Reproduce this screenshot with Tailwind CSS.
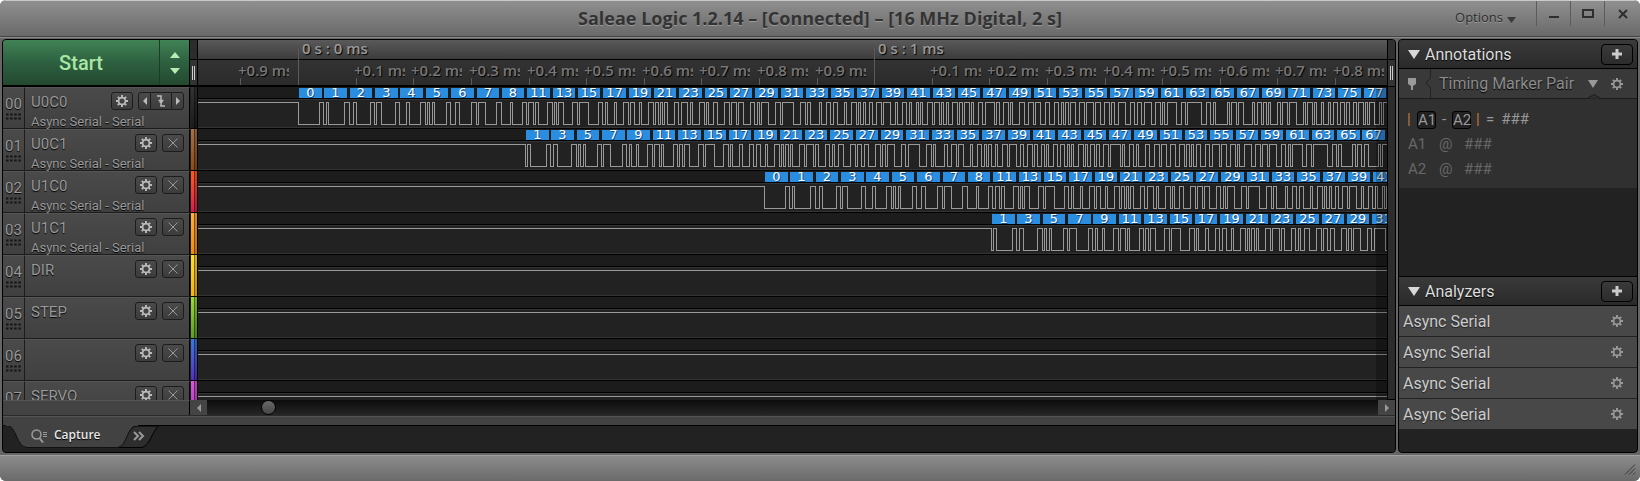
<!DOCTYPE html>
<html lang="en">
<head>
<meta charset="UTF-8">
<meta name="viewport" content="width=device-width, initial-scale=1.0">
<title>Saleae Logic 1.2.14</title>
<script src="https://cdn.jsdelivr.net/npm/@tailwindcss/browser@4"></script>
</head>
<body class="h-screen overflow-hidden bg-white font-['Roboto',sans-serif]">

<!-- Shared icons -->
<svg class="hidden">
    <symbol id="icon-gear" viewBox="0 0 12 12">
        <circle cx="6" cy="6" r="3.4" fill="none" stroke="currentColor" stroke-width="1.7"/>
        <path d="M6 0v2.4M6 9.6V12M0 6h2.4M9.6 6H12M1.8 1.8l1.6 1.6M8.6 8.6l1.6 1.6M1.8 10.2l1.6-1.6M8.6 3.4l1.6-1.6" stroke="currentColor" stroke-width="1.9"/>
    </symbol>
    <symbol id="icon-plus" viewBox="0 0 12 12">
        <path d="M6 1v10M1 6h10" stroke="currentColor" stroke-width="3"/>
    </symbol>
</svg>

<div class="flex h-full flex-col overflow-hidden rounded-md bg-[#666]">

    <!-- Title bar -->
    <header class="relative flex h-[37px] shrink-0 items-start justify-end border-t border-b border-t-[#c8caca] border-b-[#444] bg-linear-to-b from-[#8f8f8f] to-[#6a6a6a]">
        <h1 class="absolute inset-x-0 top-[3px] text-center font-['Open_Sans',sans-serif] text-lg leading-7 font-bold text-[#333] [text-shadow:0_1px_0_#999]">Saleae Logic 1.2.14 – [Connected] – [16 MHz Digital, 2 s]</h1>
        <button class="relative flex h-[34px] items-center gap-1 pr-5 font-['Open_Sans',sans-serif] text-[13px] text-[#2e2e2e] [text-shadow:0_1px_0_#999]">Options
            <svg class="mt-1 h-[6px] w-[9px]" viewBox="0 0 9 6"><path d="M0 0h9L4.500 6z" fill="#3a3a3a"/></svg>
        </button>
        <button aria-label="Minimize" class="relative flex h-[25px] w-[34px] items-center justify-center border-l border-[#5c5c5c]">
            <svg class="size-3" viewBox="0 0 12 12"><path d="M1 9h10" stroke="#2e2e2e" stroke-width="2"/></svg>
        </button>
        <button aria-label="Maximize" class="relative flex h-[25px] w-[34px] items-center justify-center border-l border-[#5c5c5c]">
            <svg class="h-[9px] w-3" viewBox="0 0 12 9"><path d="M1 1h10v7H1z" fill="none" stroke="#2e2e2e" stroke-width="2"/></svg>
        </button>
        <button aria-label="Close" class="relative flex h-[25px] w-[36px] items-center justify-center border-l border-[#5c5c5c]">
            <svg class="size-[10px]" viewBox="0 0 10 10"><path d="M1 1l8 8M9 1L1 9" stroke="#2e2e2e" stroke-width="2"/></svg>
        </button>
    </header>

    <main class="flex min-h-0 flex-1 gap-[2px] border-t border-[#8a8a8a] px-[2px] pt-px pb-[2px]">

        <!-- Capture panel -->
        <section class="flex min-w-0 flex-1 flex-col overflow-hidden rounded-[4px] border border-black bg-[#222]">
            <div class="flex min-h-0 flex-1">
                <div class="flex min-w-0 flex-1 flex-col overflow-hidden">
                    <div class="flex h-[47px] shrink-0">
                        <div class="flex w-[187px] border-r border-b-2 border-black">
                            <button class="w-[156px] bg-linear-to-b from-[#418355] via-[#2d6040] to-[#23492f] text-xl font-medium text-[#a9e6a3]">Start</button>
                            <button aria-label="Capture settings" class="flex flex-1 flex-col items-center justify-center gap-[10px] border-l border-[#1c3c26] bg-linear-to-b from-[#418355] via-[#2d6040] to-[#23492f]">
                                <svg class="h-[6px] w-[10px]" viewBox="0 0 10 6"><path d="M0 6L5 0l5 6z" fill="#b8eab2"/></svg>
                                <svg class="h-[6px] w-[10px]" viewBox="0 0 10 6"><path d="M0 0h10L5 6z" fill="#b8eab2"/></svg>
                            </button>
                        </div>
                        <div class="w-2 border-r border-b-2 border-black">
                            <div class="h-[19px] bg-[#2c2c2c]"></div>
                            <div class="flex h-[26px] items-center justify-center gap-px border-t border-black bg-[#333]">
                                <i class="h-[14px] w-px bg-[#ccc]"></i><i class="h-[14px] w-px bg-[#ccc]"></i>
                            </div>
                        </div>
                        <div id="ruler" class="relative min-w-0 flex-1 overflow-hidden border-b-2 border-black bg-[#333] font-['Open_Sans',sans-serif] text-[15px] text-[#999] [text-shadow:1px_1px_1px_#000]">
                            <div class="h-5 border-b border-black bg-linear-to-b from-[#5a5a5a] to-[#3c3c3c]"></div>
                            <div class="h-[25px] bg-linear-to-b from-[#333] to-[#2b2b2b]"></div>
                        </div>
                    </div>
                    <div id="channels" class="min-h-0 flex-1 overflow-hidden"></div>
                </div>
                <!-- Right grip -->
                <div class="flex w-2 flex-col border-l border-b border-black bg-[#2c2c2c]">
                    <div class="h-5 border-b border-black bg-[#303030]"></div>
                    <div class="flex h-[27px] items-center justify-center gap-px border-b border-black bg-[#333]">
                        <i class="h-[14px] w-px bg-[#ccc]"></i><i class="h-[14px] w-px bg-[#ccc]"></i>
                    </div>
                </div>
            </div>

            <!-- Horizontal scroll bar -->
            <div class="flex h-4 shrink-0 border-b border-[#2a2a2a]">
                <div class="w-[187px] border-t border-r border-t-[#555] border-r-black bg-[#434343]"></div>
                <button aria-label="Scroll left" class="flex w-[17px] items-center justify-center bg-[#444]">
                    <svg class="h-2 w-1" viewBox="0 0 4 8"><path d="M4 0v8L0 4z" fill="#999"/></svg>
                </button>
                <div class="flex-1 bg-linear-to-b from-[#0c0c0c] to-[#262626] pl-[54px]">
                    <div class="size-[15px] rounded-full border border-black bg-linear-to-b from-[#6a6a6a] to-[#454545]"></div>
                </div>
                <button aria-label="Scroll right" class="flex w-[17px] items-center justify-center bg-[#444]">
                    <svg class="h-2 w-1" viewBox="0 0 4 8"><path d="M0 0v8l4-4z" fill="#999"/></svg>
                </button>
            </div>
            <div class="h-[9px] shrink-0 border-t border-[#555] bg-[#424242]"></div>

            <!-- Tabs -->
            <nav class="relative flex h-[27px] shrink-0 items-start border-t border-black bg-[#222]">
                <svg class="absolute top-[-1px] left-0 h-[24px] w-[160px]" viewBox="0 0 160 24">
                    <path d="M115 22.500C122 21 124 1 134 1h21.500C150 5 146 22.500 138 22.500z" fill="#2e2e2e" stroke="#000"/>
                    <path d="M0 0.500h4C14 1 13 22 24 22.500h91C124 21 124 1 134 .5" fill="#424242" stroke="#111"/>
                    <path d="M3 0h132" stroke="#424242" stroke-width="2"/>
                </svg>
                <button class="relative ml-[28px] flex h-[18px] items-center gap-[6px] font-['Open_Sans',sans-serif] text-xs font-semibold text-[#e8e8e8] [text-shadow:0_1px_1px_#000]">
                    <svg class="mt-[2px] h-[14px] w-[17px]" viewBox="0 0 17 14" fill="none" stroke="#999"><circle cx="5.500" cy="5.500" r="4.500" stroke-width="1.500"/><path d="M8.500 9l3.500 4.500" stroke-width="2"/><path d="M12 3.500h4M12 5.500h4M12 7.500h4"/></svg>
                    Capture
                </button>
                <button aria-label="More tabs" class="relative ml-[32px] flex h-[20px] items-center">
                    <svg class="h-[10px] w-[12px]" viewBox="0 0 12 10" fill="none" stroke="#999" stroke-width="2"><path d="M1 1l4 4-4 4M6 1l4 4-4 4"/></svg>
                </button>
            </nav>
        </section>

        <!-- Side panel -->
        <aside class="flex w-[240px] shrink-0 flex-col overflow-hidden rounded-[4px] border border-black bg-[#222]">
            <div class="flex h-7 items-center bg-linear-to-b from-[#3a3a3a] to-[#2a2a2a] pr-1 pl-[9px]">
                <svg class="h-[9px] w-3" viewBox="0 0 12 9"><path d="M0 0h12L6 9z" fill="#d8d8d8"/></svg>
                <h2 class="flex-1 pt-[2px] pl-[5px] text-base leading-5 text-[#ddd] [text-shadow:0_1px_1px_#000]">Annotations</h2>
                <button aria-label="Add annotation" class="flex h-[21px] w-[32px] items-center justify-center rounded-[4px] border border-black bg-linear-to-b from-[#3a3a3a] to-[#2c2c2c] text-[#ccc]"><svg class="size-3"><use href="#icon-plus"/></svg></button>
            </div>
            <div class="relative flex h-[31px] items-center border-t border-b border-t-black border-b-[#1c1c1c] bg-[#393939] text-[#8c8c8c]">
                <svg class="ml-[9px] h-3 w-2" viewBox="0 0 8 12"><path d="M0 0h8v6L5 8v4H3V8L0 6z" fill="#999"/></svg>
                <svg class="ml-[9px] h-[29px] w-[6px]" viewBox="0 0 6 29"><path d="M5.500 0v9L1 14l4.500 5v10" fill="none" stroke="#222"/></svg>
                <span class="flex-1 pt-px pl-[8px] text-base leading-5 [text-shadow:0_1px_1px_#000]">Timing Marker Pair</span>
                <button aria-label="Marker type"><svg class="h-2 w-[10px]" viewBox="0 0 10 8"><path d="M0 0h10L5 8z" fill="#999"/></svg></button>
                <button aria-label="Marker settings" class="mr-[14px] ml-[13px] text-[#999]"><svg class="size-3"><use href="#icon-gear"/></svg></button>
                <svg class="absolute right-[36px] -bottom-px h-[5px] w-[14px]" viewBox="0 0 14 5"><path d="M0 4.500L7 .5l7 4" fill="#303030" stroke="#1c1c1c"/></svg>
            </div>
            <div class="h-[89px] bg-[#303030] pt-2 pl-[9px] text-[15px] leading-[25px] text-[#686868]">
                <p class="flex items-center text-[#999]">
                    <i class="h-[13px] w-[2px] bg-[#8a5a34]"></i>
                    <span class="ml-[7px] w-[19px] rounded-[3px] border border-black bg-[#222] text-center leading-[16px]">A1</span>
                    <span class="w-[16px] text-center">-</span>
                    <span class="w-[19px] rounded-[3px] border border-black bg-[#222] text-center leading-[16px]">A2</span>
                    <i class="ml-[6px] h-[13px] w-[2px] bg-[#8a5a34]"></i>
                    <span class="ml-[7px]">=</span>
                    <span class="ml-[7px]">###</span>
                </p>
                <p class="flex"><span class="w-[31px]">A1</span><span class="w-[25px]">@</span><span>###</span></p>
                <p class="flex"><span class="w-[31px]">A2</span><span class="w-[25px]">@</span><span>###</span></p>
            </div>
            <div class="mt-auto flex h-[29px] items-center border-t border-black bg-linear-to-b from-[#3a3a3a] to-[#2a2a2a] pr-1 pl-[9px]">
                <svg class="h-[9px] w-3" viewBox="0 0 12 9"><path d="M0 0h12L6 9z" fill="#d8d8d8"/></svg>
                <h2 class="flex-1 pt-[2px] pl-[5px] text-base leading-5 text-[#ddd] [text-shadow:0_1px_1px_#000]">Analyzers</h2>
                <button aria-label="Add analyzer" class="flex h-[21px] w-[32px] items-center justify-center rounded-[4px] border border-black bg-linear-to-b from-[#3a3a3a] to-[#2c2c2c] text-[#ccc]"><svg class="size-3"><use href="#icon-plus"/></svg></button>
            </div>
            <ul id="analyzers" class="mb-[22px] border-t border-black"></ul>
        </aside>
    </main>

    <!-- Status bar -->
    <footer class="flex h-[26px] shrink-0 items-end justify-end border-t border-[#a0a0a0] bg-linear-to-b from-[#8c8c8c] to-[#6a6a6a] pr-1 pb-[6px]">
        <svg class="h-[11px] w-[12px]" viewBox="0 0 12 11"><path d="M1 10.500l10-10M5 10.500l6-6M9 10.500l2-2" stroke="#3a3a3a"/></svg>
    </footer>
</div>

<script>
// --- Time scale (pixels, measured from the left of the graph) ---
const ZERO_X = 100;
const PX_PER_MS = 576;
const BIT_PX = 2.304;      // 250 kbaud
const FRAME_PX = 11 * BIT_PX; // start + 8 data + 2 stop

const lowBytes = [0, 1, 2, 3, 4, 5, 6, 7, 8];
const odd = (from, to) => Array.from({ length: (to - from) / 2 + 1 }, (_, i) => from + i * 2);

const CHANNELS = [
    { name: 'U0C0', serial: true, bar: 'from-[#333] to-[#1c1c1c]', start: 100.6, bytes: [...lowBytes, ...odd(11, 77)] },
    { name: 'U0C1', serial: true, bar: 'from-[#a5714a] to-[#8a4c14]', start: 327.6, bytes: odd(1, 67) },
    { name: 'U1C0', serial: true, bar: 'from-[#ff5a1c] to-[#d81848]', start: 566.6, bytes: [...lowBytes, ...odd(11, 41)] },
    { name: 'U1C1', serial: true, bar: 'from-[#ffb038] to-[#f58a00]', start: 793.6, bytes: odd(1, 31) },
    { name: 'DIR', bar: 'from-[#ffe02c] to-[#f5b400]' },
    { name: 'STEP', bar: 'from-[#9cdc3c] to-[#5c9c24]' },
    { name: '', bar: 'from-[#3878dc] to-[#5030c0]' },
    { name: 'SERVO', bar: 'from-[#d858d8] to-[#a030b0]' },
];

// --- Ruler ---
function renderRuler() {
    const ruler = document.getElementById('ruler');
    let html = '';
    for (let i = -1; ; i++) {
        const x = Math.floor(ZERO_X + 0.6 + i * PX_PER_MS / 10);
        if (x > ruler.clientWidth) break;
        const tenth = (i + 10) % 10;
        if (tenth === 0) {
            html += `<i class="absolute top-2 h-[37px] w-px bg-[#5a5a5a]" style="left:${x}px"></i>
                <span class="absolute top-0 leading-[17px] font-semibold whitespace-nowrap" style="left:${x + 4}px">0 s : ${i / 10} ms</span>`;
        } else {
            html += `<i class="absolute top-[38px] h-[7px] w-px bg-[#5a5a5a]" style="left:${x}px"></i>
                <span class="absolute top-[20px] w-[51px] overflow-hidden leading-[21px] font-semibold whitespace-nowrap text-[#777]" style="left:${x - 2}px">+0.${tenth} ms</span>`;
        }
    }
    ruler.insertAdjacentHTML('beforeend', html);
}

// --- Digital trace: UART frames, LSB first ---
function tracePath(ch) {
    const hi = 15.5, lo = 37.5;
    let d = `M0 ${hi}`;
    if (ch.bytes) {
        let level = 1;
        const go = (x, next) => {
            if (next === level) return;
            d += `H${Math.floor(x) + 0.5}V${next ? hi : lo}`;
            level = next;
        };
        ch.bytes.forEach((byte, n) => {
            const x0 = ch.start + n * FRAME_PX;
            go(x0, 0);
            for (let bit = 0; bit < 8; bit++) go(x0 + (bit + 1) * BIT_PX, (byte >> bit) & 1);
            go(x0 + 9 * BIT_PX, 1);
        });
    }
    return d + 'H4000';
}

function byteBoxes(ch) {
    return (ch.bytes || []).map((byte, n) => {
        const x = Math.floor(ch.start + 1 + n * FRAME_PX);
        const w = Math.floor(ch.start + 23.400 + n * FRAME_PX) - x;
        return `<span class="absolute top-px h-[10px] bg-[#2b8de0] text-center font-['DejaVu_Sans',sans-serif] text-[13px] leading-[10px] text-white [text-shadow:1px_1px_0_#1a4a7a]" style="left:${x}px;width:${w}px">${byte}</span>`;
    }).join('');
}

const BUTTON = 'flex h-[18px] items-center justify-center rounded-[3px] border border-[#1c1c1c] bg-linear-to-b from-[#4a4a4a] to-[#3c3c3c] text-[#bbb]';

function controls(i) {
    const gear = `<button aria-label="Channel settings" class="${BUTTON} w-[22px]"><svg class="size-3"><use href="#icon-gear"/></svg></button>`;
    if (i > 0) {
        return `${gear}<button aria-label="Hide channel" class="${BUTTON} w-[22px]"><svg class="size-[10px]" viewBox="0 0 10 10"><path d="M.5 .5l9 9M9.500 .5l-9 9" stroke="#999"/></svg></button>`;
    }
    return `${gear}<div class="flex">
        <button aria-label="Previous edge" class="${BUTTON} w-[13px] rounded-r-none"><svg class="h-2 w-1" viewBox="0 0 4 8"><path d="M4 0v8L0 4z" fill="currentColor"/></svg></button>
        <button aria-label="Trigger" class="${BUTTON} w-[20px] rounded-none border-x-0"><svg class="h-3 w-2" viewBox="0 0 8 12"><path d="M0 1h4v10h4M1.500 5.500h5M2.500 7h3" fill="none" stroke="currentColor" stroke-width="1.500"/></svg></button>
        <button aria-label="Next edge" class="${BUTTON} w-[13px] rounded-l-none"><svg class="h-2 w-1" viewBox="0 0 4 8"><path d="M0 0v8l4-4z" fill="currentColor"/></svg></button>
    </div>`;
}

function renderChannels() {
    document.getElementById('channels').innerHTML = CHANNELS.map((ch, i) => `
        <div class="flex h-[42px]">
            <div class="w-[22px] border-t border-r border-b border-t-[#555] border-r-[#1c1c1c] border-b-[#1c1c1c] bg-linear-to-b from-[#4a4a4a] to-[#404040] pt-2 text-center text-[15px] leading-[16px] text-[#999] [text-shadow:0_1px_1px_#000]">
                0${i}
                <svg class="mx-auto mt-px h-[7px] w-[15px]" viewBox="0 0 15 7"><path d="M0 1.500h15M0 5.500h15" stroke="#151515" stroke-width="2" stroke-dasharray="2.500 1.600"/></svg>
            </div>
            <div class="w-[165px] border-t border-r border-b border-t-[#555] border-r-black border-b-[#1c1c1c] bg-linear-to-b from-[#4a4a4a] to-[#404040] pr-[5px] pl-[6px] text-[#999] [text-shadow:0_1px_1px_#000]">
                <div class="flex h-[26px] items-center gap-[5px]">
                    <span class="flex-1 pt-[2px] text-[15px]">${ch.name}</span>
                    ${controls(i)}
                </div>
                ${ch.serial ? '<p class="text-[13px] leading-[15px] whitespace-nowrap">Async Serial - Serial</p>' : ''}
            </div>
            <div class="w-2 border-x border-b border-black border-l-[#222] bg-linear-to-b ${ch.bar}"><div class="ml-auto h-full w-[3px] border-l border-black/40 bg-black/20"></div></div>
            <div class="relative min-w-0 flex-1 overflow-hidden border-b border-black bg-[#222]">
                <div class="h-3 border-b border-black bg-[#1c1c1c]"></div>
                <div class="h-[29px] border-y border-[#333] bg-[#222]"></div>
                <svg class="absolute inset-0 h-full w-full"><path d="${tracePath(ch)}" fill="none" stroke="#999" shape-rendering="crispEdges"/></svg>
                ${byteBoxes(ch)}
                <div class="absolute inset-y-0 right-0 w-[11px] bg-black/25"></div>
            </div>
        </div>`).join('');
}

function renderAnalyzers() {
    document.getElementById('analyzers').innerHTML = Array(4).fill('Async Serial').map(name => `
        <li class="flex h-[31px] items-center justify-between border-b border-[#222] bg-[#484848] pr-[14px] pl-1 text-base text-[#ccc] [text-shadow:0_1px_1px_#222]">
            <span class="pt-[2px]">${name}</span>
            <button aria-label="Analyzer settings" class="text-[#999]"><svg class="size-3"><use href="#icon-gear"/></svg></button>
        </li>`).join('');
}

renderRuler();
renderChannels();
renderAnalyzers();
</script>
</body>
</html>
